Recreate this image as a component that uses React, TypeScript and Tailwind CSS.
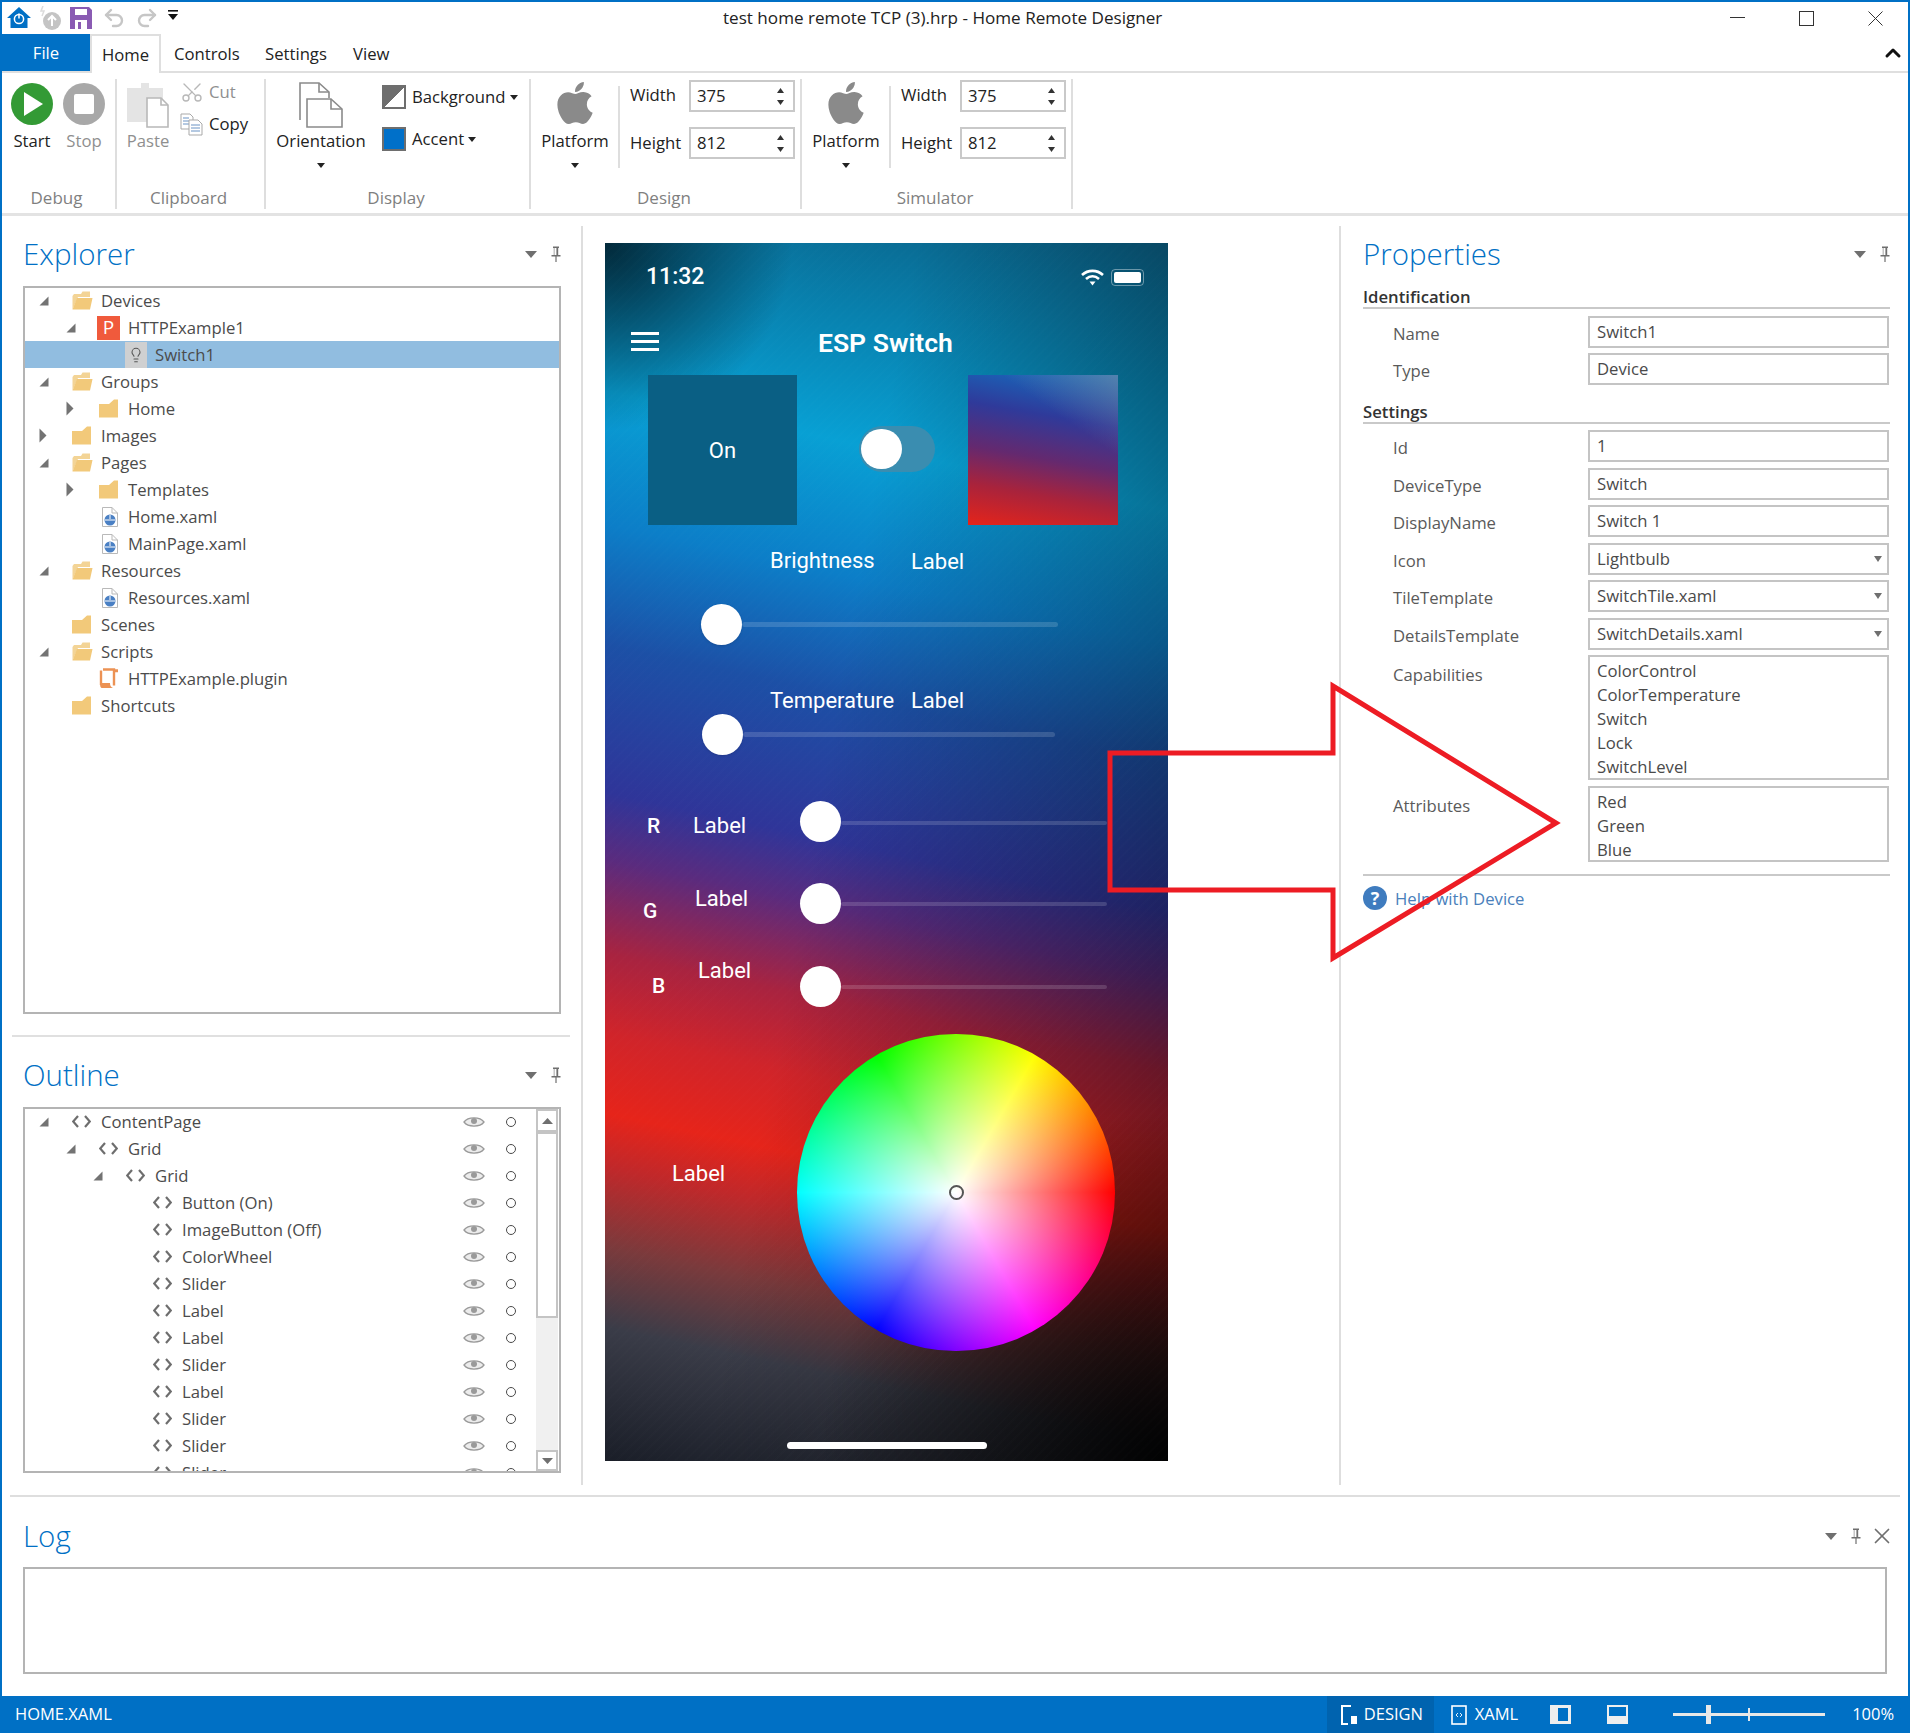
import { Undo2, Redo2, Scissors, ChevronUp, Lightbulb, X } from "lucide-react";
import { FaApple } from "react-icons/fa";

type Row = { l: number; a?: "open" | "closed"; i?: string; t: string; sel?: boolean };

const explorerRows: Row[] = [
  { l: 0, a: "open", i: "folderOpen", t: "Devices" },
  { l: 1, a: "open", i: "p", t: "HTTPExample1" },
  { l: 2, i: "bulb", t: "Switch1", sel: true },
  { l: 0, a: "open", i: "folderOpen", t: "Groups" },
  { l: 1, a: "closed", i: "folder", t: "Home" },
  { l: 0, a: "closed", i: "folder", t: "Images" },
  { l: 0, a: "open", i: "folderOpen", t: "Pages" },
  { l: 1, a: "closed", i: "folder", t: "Templates" },
  { l: 1, i: "doc", t: "Home.xaml" },
  { l: 1, i: "doc", t: "MainPage.xaml" },
  { l: 0, a: "open", i: "folderOpen", t: "Resources" },
  { l: 1, i: "doc", t: "Resources.xaml" },
  { l: 0, i: "folder", t: "Scenes" },
  { l: 0, a: "open", i: "folderOpen", t: "Scripts" },
  { l: 1, i: "plugin", t: "HTTPExample.plugin" },
  { l: 0, i: "folder", t: "Shortcuts" },
];

const outlineRows: Row[] = [
  { l: 0, a: "open", t: "ContentPage" },
  { l: 1, a: "open", t: "Grid" },
  { l: 2, a: "open", t: "Grid" },
  { l: 3, t: "Button (On)" },
  { l: 3, t: "ImageButton (Off)" },
  { l: 3, t: "ColorWheel" },
  { l: 3, t: "Slider" },
  { l: 3, t: "Label" },
  { l: 3, t: "Label" },
  { l: 3, t: "Slider" },
  { l: 3, t: "Label" },
  { l: 3, t: "Slider" },
  { l: 3, t: "Slider" },
  { l: 3, t: "Slider" },
];

const indent = ["pl-[14px]", "pl-[41px]", "pl-[68px]", "pl-[95px]"];

function Arrow({ kind }: { kind?: "open" | "closed" }) {
  if (kind === "open")
    return (
      <svg width="10" height="10" viewBox="0 0 10 10">
        <polygon points="9.5,0.5 9.5,9.5 0.5,9.5" fill="#737373" />
      </svg>
    );
  if (kind === "closed")
    return (
      <svg width="8" height="15" viewBox="0 0 8 15">
        <polygon points="0.5,0.5 7.5,7.5 0.5,14.5" fill="#737373" />
      </svg>
    );
  return null;
}

function TreeIcon({ kind }: { kind?: string }) {
  if (kind === "folderOpen")
    return (
      <svg width="21" height="19" viewBox="0 0 21 19">
        <path d="M0.5 18.5V5L2 3h7l1.5-2.5H18V6H6z" fill="#f3d496" />
        <path d="M0.5 18.5L5 7h15.5l-2.5 11.5z" fill="#f2c97a" />
      </svg>
    );
  if (kind === "folder")
    return (
      <svg width="19" height="19" viewBox="0 0 19 19">
        <path d="M0 18.5V5h10l5-4.5h4V18.5z" fill="#f2c97a" />
      </svg>
    );
  if (kind === "p")
    return (
      <div className="flex h-[24px] w-[23px] -ml-[2px] items-center justify-center bg-[#f05a3c] text-[19px] leading-none text-white">
        P
      </div>
    );
  if (kind === "bulb")
    return (
      <div className="flex h-[26px] w-[22px] -ml-[1px] items-center justify-center bg-[#cfd0d1]">
        <Lightbulb size={16} color="#555" strokeWidth={1.6} />
      </div>
    );
  if (kind === "doc")
    return (
      <svg width="16" height="20" viewBox="0 0 16 20" className="ml-[3px]">
        <path d="M0.5 0.5H10L15.5 6V19.5H0.5z" fill="#fff" stroke="#b9b9b9" />
        <path d="M10 0.5V6H15.5" fill="none" stroke="#b9b9b9" />
        <circle cx="8" cy="13" r="5.5" fill="#4a80c4" />
        <path d="M3 13h10M8 8v4" stroke="#fff" strokeWidth="1" />
      </svg>
    );
  if (kind === "plugin")
    return (
      <svg width="20" height="21" viewBox="0 0 20 21">
        <path d="M4 1.5H15V17.5" fill="none" stroke="#ec9254" strokeWidth="2.4" />
        <path d="M2 2.5V17" fill="none" stroke="#ec9254" strokeWidth="2.4" />
        <path d="M15 1.2h4v3h-3z" fill="#ec9254" />
        <path d="M1 15h10c0 3 1 4 3 5H3c-1.5 0-2-2-2-5z" fill="#ec9254" />
      </svg>
    );
  return (
    <svg width="19" height="13" viewBox="0 0 19 13" className="block">
      <path d="M6 1L1.2 6.5L6 12M13 1l4.8 5.5L13 12" fill="none" stroke="#6e6e6e" strokeWidth="2.2" />
    </svg>
  );
}

function TreeRow({ row, extras }: { row: Row; extras?: boolean }) {
  return (
    <div
      className={`flex h-[27px] shrink-0 items-center text-[#4b4b4b] ${indent[row.l]} ${row.sel ? "bg-[#91bde0]" : ""}`}
    >
      <div className="flex w-[33px] shrink-0 items-center">
        <Arrow kind={row.a} />
      </div>
      <div className="flex w-[29px] shrink-0 items-center">
        <TreeIcon kind={row.i} />
      </div>
      <span className="whitespace-nowrap">{row.t}</span>
      {extras && (
        <div className="ml-auto flex items-center pr-[20px]">
          <svg width="22" height="14" viewBox="0 0 22 14" className="mr-[21px]">
            <path d="M1 7C5 1.5 17 1.5 21 7C17 12.5 5 12.5 1 7z" fill="#ececec" stroke="#9a9a9a" strokeWidth="1.3" />
            <circle cx="11" cy="6" r="3" fill="#9a9a9a" />
          </svg>
          <div className="h-[10px] w-[10px] rounded-full border-[1.5px] border-[#4a4a4a]" />
        </div>
      )}
    </div>
  );
}

function PaneIcons({ close }: { close?: boolean }) {
  return (
    <div className="flex items-center gap-[14px]">
      <svg width="12" height="7" viewBox="0 0 12 7">
        <polygon points="0,0 12,0 6,7" fill="#6f6f6f" />
      </svg>
      <svg width="10" height="16" viewBox="0 0 10 16">
        <path d="M2 0.5H8V2H7.2V9H9.5V10.5H5.6V16H4.4V10.5H0.5V9H2.8V2H2z" fill="#6f6f6f" />
        <rect x="3.4" y="2" width="2" height="7" fill="#fff" />
      </svg>
      {close && <X size={26} color="#6f6f6f" strokeWidth={1.6} className="-mx-[6px]" />}
    </div>
  );
}

function PaneHeader({ title, close }: { title: string; close?: boolean }) {
  return (
    <div className="flex h-[42px] items-center justify-between">
      <span className="text-[29.5px] font-light leading-[42px] text-[#0070c5]">{title}</span>
      <PaneIcons close={close} />
    </div>
  );
}

function Caret({ className }: { className?: string }) {
  return (
    <svg width="8" height="5" viewBox="0 0 8 5" className={className}>
      <polygon points="0,0 8,0 4,5" fill="#222" />
    </svg>
  );
}

function Spinner({ value }: { value: string }) {
  return (
    <div className="flex h-[32px] w-[106px] items-center justify-between border-2 border-[#c9c9c9] pl-[6px] pr-[9px] text-[#222]">
      <span className="leading-none">{value}</span>
      <div className="flex flex-col gap-[7px]">
        <svg width="7" height="5" viewBox="0 0 7 5">
          <polygon points="0,5 7,5 3.5,0" fill="#333" />
        </svg>
        <svg width="7" height="5" viewBox="0 0 7 5">
          <polygon points="0,0 7,0 3.5,5" fill="#333" />
        </svg>
      </div>
    </div>
  );
}

function GroupLabel({ children, className }: { children: string; className?: string }) {
  return <div className={`h-[22px] text-center text-[17px] leading-[21px] text-[#7f7f7f] ${className ?? "pr-[3px]"}`}>{children}</div>;
}

function PlatformPart() {
  return (
    <>
      <div className="flex w-[66px] shrink-0 flex-col items-center">
        <FaApple size={48} color="#8a8a8a" />
        <span className="mt-[2px] leading-[24px] text-[#222]">Platform</span>
        <Caret className="mt-[10px]" />
      </div>
      <div className="ml-[10px] mt-[7px] h-[82px] w-[2px] bg-[#dedede]" />
      <div className="ml-[10px] mt-[1px] grid grid-cols-[59px_106px] items-center gap-y-[15px] self-start text-[#222]">
        <span className="-mt-[2px]">Width</span>
        <Spinner value="375" />
        <span>Height</span>
        <Spinner value="812" />
      </div>
    </>
  );
}

function PropRow({ label, value, select }: { label: string; value: string; select?: boolean }) {
  return (
    <>
      <span className="self-center pl-[30px] pt-[4px] text-[#5a5a5a]">{label}</span>
      <div className="flex h-[32px] items-center justify-between border-2 border-[#c4c4c4] pl-[7px] pr-[5px] text-[#4a4a4a]">
        <span className="pt-[1px] leading-none">{value}</span>
        {select && (
          <svg width="8" height="6" viewBox="0 0 8 6">
            <polygon points="0,0 8,0 4,6" fill="#6f6f6f" />
          </svg>
        )}
      </div>
    </>
  );
}

function ListRow({ label, lines, height }: { label: string; lines: string[]; height: string }) {
  return (
    <>
      <span className="pl-[30px] pt-[7px] text-[#5a5a5a]">{label}</span>
      <div className={`${height} border-2 border-[#c4c4c4] pl-[7px] pt-[2px] leading-[24px] text-[#4a4a4a]`}>
        {lines.map((l) => (
          <div key={l}>{l}</div>
        ))}
      </div>
    </>
  );
}

function Phone() {
  return (
    <div className="relative mt-[27px] ml-[22px] h-[1218px] w-[563px] overflow-hidden bg-[repeating-linear-gradient(135deg,rgba(255,255,255,0.008)_0px,rgba(255,255,255,0.008)_2px,rgba(0,0,0,0)_2px,rgba(0,0,0,0)_7px),radial-gradient(circle_at_100%_100%,rgba(0,0,0,0.95),rgba(0,0,0,0)_26%),radial-gradient(circle_at_0%_0%,rgba(0,20,30,0.8),rgba(0,0,0,0)_14%),linear-gradient(100deg,rgba(0,0,0,0)_40%,rgba(0,0,0,0.46)_100%),linear-gradient(192deg,#0a5f84_0%,#0880ad_10%,#08a0d4_20%,#0c7ec8_30%,#1c50a6_39%,#2f3599_50%,#5a2b7e_55%,#a82340_62%,#d0242a_68%,#e6241a_74%,#c0282a_78%,#7a3a3c_84%,#3a3c48_90%,#1a1e28_100%)] font-['Roboto'] text-white">
      <span className="absolute left-[41px] top-[20px] text-[23px] font-medium leading-[28px]">11:32</span>
      <svg width="23" height="17" viewBox="0 0 23 17" className="absolute left-[476px] top-[26px]">
        <path d="M1 6C7 0.5 16 0.5 22 6M5 10C9 6.5 14 6.5 18 10" fill="none" stroke="#fff" strokeWidth="2.6" />
        <polygon points="8.5,12.5 14.5,12.5 11.5,16.5" fill="#fff" />
      </svg>
      <div className="absolute left-[506px] top-[26px] flex h-[17px] w-[33px] items-center rounded-[4px] border border-white/40 p-[2px]">
        <div className="h-full w-full rounded-[2px] bg-white" />
      </div>
      <div className="absolute left-[26px] top-[89px] flex w-[28px] flex-col gap-[5px]">
        <div className="h-[3px] bg-white" />
        <div className="h-[3px] bg-white" />
        <div className="h-[3px] bg-white" />
      </div>
      <span className="absolute left-[213px] top-[83px] text-[26.5px] font-semibold leading-[34px]">ESP Switch</span>

      <div className="absolute left-[43px] top-[132px] flex h-[150px] w-[149px] items-center justify-center bg-[#0a5f84] text-[22px]">
        On
      </div>
      <div className="absolute left-[254px] top-[183px] h-[46px] w-[76px] rounded-full bg-[#3a8db0]" />
      <div className="absolute left-[256px] top-[186px] h-[40px] w-[41px] rounded-full bg-white" />
      <div className="absolute left-[363px] top-[132px] h-[150px] w-[150px] bg-[linear-gradient(215deg,rgba(160,150,150,0.45),rgba(160,150,150,0)_32%),linear-gradient(190deg,#1272c2_0%,#2f3a9a_30%,#64296f_55%,#a8233c_76%,#e5241a_100%)]" />

      <span className="absolute left-[165px] top-[304px] text-[22px] leading-[28px]">Brightness</span>
      <span className="absolute left-[306px] top-[305px] text-[22px] leading-[28px]">Label</span>
      <div className="absolute left-[137px] top-[379px] h-[5px] w-[316px] rounded-full bg-white/15" />
      <div className="absolute left-[96px] top-[361px] h-[41px] w-[41px] rounded-full bg-white shadow" />

      <span className="absolute left-[165px] top-[444px] text-[22px] leading-[28px]">Temperature</span>
      <span className="absolute left-[306px] top-[444px] text-[22px] leading-[28px]">Label</span>
      <div className="absolute left-[138px] top-[489px] h-[5px] w-[312px] rounded-full bg-white/15" />
      <div className="absolute left-[97px] top-[471px] h-[41px] w-[41px] rounded-full bg-white shadow" />

      <span className="absolute left-[42px] top-[569px] text-[21px] font-medium leading-[28px]">R</span>
      <span className="absolute left-[88px] top-[569px] text-[22px] leading-[28px]">Label</span>
      <div className="absolute left-[236px] top-[578px] h-[4px] w-[266px] rounded-full bg-white/15" />
      <div className="absolute left-[195px] top-[558px] h-[41px] w-[41px] rounded-full bg-white" />

      <span className="absolute left-[38px] top-[654px] text-[21px] font-medium leading-[28px]">G</span>
      <span className="absolute left-[90px] top-[642px] text-[22px] leading-[28px]">Label</span>
      <div className="absolute left-[236px] top-[659px] h-[4px] w-[266px] rounded-full bg-white/15" />
      <div className="absolute left-[195px] top-[640px] h-[41px] w-[41px] rounded-full bg-white" />

      <span className="absolute left-[47px] top-[729px] text-[21px] font-medium leading-[28px]">B</span>
      <span className="absolute left-[93px] top-[714px] text-[22px] leading-[28px]">Label</span>
      <div className="absolute left-[236px] top-[742px] h-[4px] w-[266px] rounded-full bg-white/15" />
      <div className="absolute left-[195px] top-[723px] h-[41px] w-[41px] rounded-full bg-white" />

      <span className="absolute left-[67px] top-[917px] text-[22px] leading-[28px]">Label</span>
      <div className="absolute left-[192px] top-[791px] h-[317px] w-[318px] rounded-full bg-[radial-gradient(closest-side,#ffffff,rgba(255,255,255,0)),conic-gradient(from_30deg,#ffff00,#ff0000,#ff00ff,#0000ff,#00ffff,#00ff00,#ffff00)]" />
      <div className="absolute left-[344px] top-[942px] h-[15px] w-[15px] rounded-full border-2 border-[#555]" />

      <div className="absolute left-[182px] top-[1199px] h-[7px] w-[200px] rounded-full bg-white" />
    </div>
  );
}

export default function App() {
  return (
    <div className="relative flex h-[1733px] w-[1910px] flex-col overflow-hidden bg-[#0070c5] px-[2px] pt-[2px] font-['Open_Sans',sans-serif] text-[16.7px]">
      <div className="flex min-h-0 flex-1 flex-col bg-white">
        {/* title bar */}
        <div className="flex h-[32px] shrink-0 items-center">
          <div className="flex w-[721px] shrink-0 items-center pl-[5px]">
            <svg width="24" height="22" viewBox="0 0 24 22">
              <path d="M12 0L24 11H20.5V21H3.5V11H0z" fill="#0070c5" />
              <circle cx="12" cy="12" r="4.6" fill="none" stroke="#fff" strokeWidth="1.5" />
              <path d="M12 6.5v5" stroke="#fff" strokeWidth="1.5" />
            </svg>
            <svg width="23" height="24" viewBox="0 0 23 24" className="ml-[8px]">
              <circle cx="13" cy="15" r="9" fill="#c4c4c4" />
              <path d="M13 20v-9M9 14l4-4 4 4" fill="none" stroke="#fff" strokeWidth="2" />
              <path d="M4 0l-2 5 3 0-2 5" fill="none" stroke="#dcdcdc" strokeWidth="1.5" />
            </svg>
            <svg width="22" height="22" viewBox="0 0 22 22" className="ml-[8px]">
              <path d="M0 0H19L22 3V22H0z" fill="#8a5bb3" />
              <rect x="5" y="2" width="12" height="6" fill="#fff" />
              <rect x="5" y="13" width="12" height="9" fill="#fff" />
              <rect x="8" y="15" width="3" height="7" fill="#8a5bb3" />
            </svg>
            <Undo2 size={24} color="#c6c6c6" strokeWidth={2.4} className="ml-[10px]" />
            <Redo2 size={24} color="#c6c6c6" strokeWidth={2.4} className="ml-[9px]" />
            <svg width="10" height="10" viewBox="0 0 10 10" className="ml-[9px] -mt-[6px]">
              <rect x="0" y="0" width="10" height="1.6" fill="#111" />
              <polygon points="0,4 10,4 5,10" fill="#111" />
            </svg>
          </div>
          <span className="whitespace-nowrap text-[17.1px] text-[#222]">test home remote TCP (3).hrp - Home Remote Designer</span>
          <div className="ml-auto flex items-center gap-[54px] pr-[25px]">
            <svg width="15" height="15" viewBox="0 0 15 15" className="-mt-[2px]">
              <path d="M0 7.5H15" stroke="#333" strokeWidth="1" />
            </svg>
            <svg width="15" height="15" viewBox="0 0 15 15">
              <rect x="0.5" y="0.5" width="14" height="14" fill="none" stroke="#333" strokeWidth="1" />
            </svg>
            <svg width="15" height="15" viewBox="0 0 15 15">
              <path d="M0.5 0.5L14.5 14.5M14.5 0.5L0.5 14.5" stroke="#333" strokeWidth="1" />
            </svg>
          </div>
        </div>

        {/* tabs */}
        <div className="flex h-[39px] shrink-0 items-stretch border-b-2 border-[#dfdfdf] text-[#222]">
          <div className="flex h-[37px] w-[88px] items-center justify-center bg-[#0070c5] text-white">File</div>
          <div className="-mb-[2px] flex h-[39px] w-[71px] items-center justify-center border-x-2 border-t-2 border-[#dfdfdf] bg-white">
            Home
          </div>
          <div className="flex w-[104px] items-center pl-[13px] pt-[2px]">Controls</div>
          <div className="flex w-[88px] items-center pt-[2px]">Settings</div>
          <div className="flex w-[60px] items-center pt-[2px]">View</div>
          <div className="ml-auto flex items-center pr-[3px]">
            <ChevronUp size={24} color="#111" strokeWidth={3} />
          </div>
        </div>

        {/* ribbon */}
        <div className="flex h-[143px] shrink-0 border-b-[3px] border-[#e3e3e3] pt-[6px] text-[#222]">
          <div className="flex h-[130px] w-[115px] shrink-0 flex-col border-r-2 border-[#dedede]">
            <div className="flex h-[108px] gap-[10px] pl-[9px] pt-[4px]">
              <div className="flex w-[42px] flex-col items-center">
                <div className="flex h-[42px] w-[42px] items-center justify-center rounded-full bg-[#339a35]">
                  <svg width="20" height="24" viewBox="0 0 20 24" className="ml-[2px]">
                    <polygon points="1,0 20,12 1,24" fill="#fff" />
                  </svg>
                </div>
                <span className="mt-[4px] leading-[24px]">Start</span>
              </div>
              <div className="flex w-[42px] flex-col items-center">
                <div className="flex h-[42px] w-[42px] items-center justify-center rounded-full bg-[#a8a8a8]">
                  <div className="h-[20px] w-[20px] rounded-[2px] bg-white" />
                </div>
                <span className="mt-[4px] leading-[24px] text-[#8f8f8f]">Stop</span>
              </div>
            </div>
            <GroupLabel className="pr-[4px]">Debug</GroupLabel>
          </div>

          <div className="flex h-[130px] w-[149px] shrink-0 flex-col border-r-2 border-[#dedede]">
            <div className="flex h-[108px] pl-[10px]">
              <div className="flex w-[42px] flex-col items-center pt-[3px]">
                <svg width="42" height="46" viewBox="0 0 42 46">
                  <path d="M0 6H14V1H22V6H36V40H0z" fill="#e4e4e4" />
                  <path d="M20 16H34L41 23V45H20z" fill="#fff" stroke="#b8b8b8" strokeWidth="1.6" />
                  <path d="M34 16V23H41" fill="none" stroke="#b8b8b8" strokeWidth="1.6" />
                </svg>
                <span className="mt-[1px] leading-[24px] text-[#8f8f8f]">Paste</span>
              </div>
              <div className="ml-[11px] flex flex-col gap-[7px]">
                <div className="flex h-[26px] items-center text-[#8f8f8f]">
                  <Scissors size={24} color="#b8b8b8" strokeWidth={1.4} className="-rotate-90" />
                  <span className="ml-[5px]">Cut</span>
                </div>
                <div className="-mt-[1px] flex h-[26px] items-center">
                  <svg width="23" height="23" viewBox="0 0 23 23">
                    <path d="M1 1H10L13 4V16H1z" fill="#fff" stroke="#a9a9a9" />
                    <path d="M3 5H9M3 8H10M3 11H10" stroke="#6b93c4" />
                    <path d="M9 7H18L22 11V22H9z" fill="#fff" stroke="#a9a9a9" />
                    <path d="M11 12H20M11 15H20M11 18H20" stroke="#6b93c4" />
                  </svg>
                  <span className="ml-[6px]">Copy</span>
                </div>
              </div>
            </div>
            <GroupLabel className="pr-[4px]">Clipboard</GroupLabel>
          </div>

          <div className="flex h-[130px] w-[265px] shrink-0 flex-col border-r-2 border-[#dedede]">
            <div className="flex h-[108px] pl-[10px]">
              <div className="flex w-[90px] flex-col items-center pt-[3px]">
                <svg width="44" height="46" viewBox="0 0 44 46">
                  <path d="M1 38V1H20L30 10V16" fill="none" stroke="#8a8a8a" strokeWidth="1.6" />
                  <path d="M20 1V10H30" fill="none" stroke="#8a8a8a" strokeWidth="1.6" />
                  <path d="M8 17H32L43 27V45H8z" fill="#fff" stroke="#8a8a8a" strokeWidth="1.6" />
                  <path d="M32 17V27H43" fill="none" stroke="#8a8a8a" strokeWidth="1.6" />
                </svg>
                <span className="mt-[1px] leading-[24px]">Orientation</span>
                <Caret className="mt-[10px]" />
              </div>
              <div className="ml-[16px] flex flex-col gap-[18px] pt-[6px]">
                <div className="flex h-[24px] items-center">
                  <div className="h-[24px] w-[24px] border-2 border-[#6e6e6e] bg-[linear-gradient(135deg,#6e6e6e_50%,#ffffff_50%)]" />
                  <span className="ml-[6px]">Background</span>
                  <Caret className="ml-[5px]" />
                </div>
                <div className="flex h-[24px] items-center">
                  <div className="h-[24px] w-[24px] border-2 border-[#6e6e6e] bg-[#0070c9]" />
                  <span className="ml-[6px]">Accent</span>
                  <Caret className="ml-[4px]" />
                </div>
              </div>
            </div>
            <GroupLabel>Display</GroupLabel>
          </div>

          <div className="flex h-[130px] w-[271px] shrink-0 flex-col border-r-2 border-[#dedede]">
            <div className="flex h-[108px] pl-[11px]">
              <PlatformPart />
            </div>
            <GroupLabel>Design</GroupLabel>
          </div>

          <div className="flex h-[130px] w-[271px] shrink-0 flex-col border-r-2 border-[#dedede]">
            <div className="flex h-[108px] pl-[11px]">
              <PlatformPart />
            </div>
            <GroupLabel>Simulator</GroupLabel>
          </div>
        </div>

        {/* main panes */}
        <div className="flex h-[1279px] shrink-0">
          <div className="flex w-[579px] shrink-0 flex-col pl-[21px] pr-[20px]">
            <div className="mt-[17px]">
              <PaneHeader title="Explorer" />
            </div>
            <div className="mt-[11px] flex h-[728px] flex-col border-2 border-[#b4b4b4]">
              <div className="-mt-[1px] flex flex-col">
                {explorerRows.map((r, i) => (
                  <TreeRow key={i} row={r} />
                ))}
              </div>
            </div>
            <div className="-ml-[11px] mt-[21px] h-[2px] w-[558px] bg-[#e0e0e0]" />
            <div className="mt-[17px]">
              <PaneHeader title="Outline" />
            </div>
            <div className="mt-[11px] flex h-[366px] border-2 border-[#b4b4b4]">
              <div className="-mt-[1px] flex min-w-0 flex-1 flex-col overflow-hidden">
                {outlineRows.map((r, i) => (
                  <TreeRow key={i} row={r} extras />
                ))}
              </div>
              <div className="mr-[1px] flex w-[22px] shrink-0 flex-col">
                <div className="flex h-[23px] shrink-0 items-center justify-center border-2 border-[#c4c4c4]">
                  <svg width="11" height="6" viewBox="0 0 11 6">
                    <polygon points="0,6 11,6 5.5,0" fill="#6f6f6f" />
                  </svg>
                </div>
                <div className="h-[186px] shrink-0 border-2 border-[#c4c4c4]" />
                <div className="flex-1 bg-[#f0f0f0]" />
                <div className="flex h-[21px] shrink-0 items-center justify-center border-2 border-[#c4c4c4]">
                  <svg width="11" height="6" viewBox="0 0 11 6">
                    <polygon points="0,0 11,0 5.5,6" fill="#6f6f6f" />
                  </svg>
                </div>
              </div>
            </div>
          </div>

          <div className="my-[10px] w-[2px] shrink-0 bg-[#dedede]" />

          <div className="w-[756px] shrink-0">
            <Phone />
          </div>

          <div className="my-[10px] w-[2px] shrink-0 bg-[#dedede]" />

          <div className="flex min-w-0 flex-1 flex-col pl-[22px] pr-[18px]">
            <div className="mt-[17px]">
              <PaneHeader title="Properties" />
            </div>
            <div className="mt-[11px] h-[23px] border-b-2 border-[#c9c9c9] font-semibold leading-[21px] text-[#333]">
              Identification
            </div>
            <div className="mt-[7px] grid grid-cols-[225px_301px] gap-y-[5px]">
              <PropRow label="Name" value="Switch1" />
              <PropRow label="Type" value="Device" />
            </div>
            <div className="mt-[16px] h-[23px] border-b-2 border-[#c9c9c9] font-semibold leading-[21px] text-[#333]">
              Settings
            </div>
            <div className="mt-[6px] grid grid-cols-[225px_301px] gap-y-[5.5px]">
              <PropRow label="Id" value="1" />
              <PropRow label="DeviceType" value="Switch" />
              <PropRow label="DisplayName" value="Switch 1" />
              <PropRow label="Icon" value="Lightbulb" select />
              <PropRow label="TileTemplate" value="SwitchTile.xaml" select />
              <PropRow label="DetailsTemplate" value="SwitchDetails.xaml" select />
              <ListRow
                label="Capabilities"
                lines={["ColorControl", "ColorTemperature", "Switch", "Lock", "SwitchLevel"]}
                height="h-[125px]"
              />
              <ListRow label="Attributes" lines={["Red", "Green", "Blue"]} height="h-[76px]" />
            </div>
            <div className="mt-[12px] h-[2px] bg-[#c9c9c9]" />
            <div className="mt-[10px] flex items-center">
              <div className="flex h-[24px] w-[24px] items-center justify-center rounded-full bg-[#3f7cbf] text-[18px] font-bold leading-none text-white">
                ?
              </div>
              <span className="ml-[8px] text-[#4a80bb]">Help with Device</span>
            </div>
          </div>
        </div>

        {/* log */}
        <div className="mx-[8px] h-[2px] shrink-0 bg-[#dedede]" />
        <div className="flex min-h-0 flex-1 flex-col pl-[21px] pr-[19px]">
          <div className="mt-[18px]">
            <PaneHeader title="Log" close />
          </div>
          <div className="mt-[10px] h-[107px] w-[1864px] border-2 border-[#b4b4b4]" />
        </div>

        {/* status bar */}
        <div className="-mx-[2px] flex h-[37px] shrink-0 items-center bg-[#0070c5] text-[16.5px] text-white">
          <span className="pl-[15px]">HOME.XAML</span>
          <div className="ml-[1215px] flex h-full w-[107px] items-center bg-[#0063af] pl-[14px]">
            <svg width="17" height="20" viewBox="0 0 17 20">
              <path d="M10 1H1V19H7" fill="none" stroke="#fff" strokeWidth="2" />
              <rect x="10" y="11" width="6" height="8" fill="#fff" />
            </svg>
            <span className="ml-[6px]">DESIGN</span>
          </div>
          <div className="ml-[17px] flex items-center">
            <svg width="16" height="20" viewBox="0 0 16 20">
              <rect x="1" y="1" width="14" height="18" fill="none" stroke="#fff" strokeWidth="1.6" />
              <path d="M7 8L5 10L7 12M9 8L11 10L9 12" fill="none" stroke="#fff" strokeWidth="0.9" />
            </svg>
            <span className="ml-[8px]">XAML</span>
          </div>
          <div className="ml-[32px] flex h-[19px] w-[21px] border-[3px] border-l-[8px] border-[#eee]" />
          <div className="ml-[36px] flex h-[19px] w-[21px] flex-col border-[2px] border-b-[8px] border-[#eee] bg-[#0070c5]" />
          <div className="relative ml-[45px] h-[3px] w-[152px] bg-[#e8e8e8]">
            <div className="absolute left-[33px] top-[-8px] h-[19px] w-[5px] bg-[#e8e8e8]" />
            <div className="absolute left-[75px] top-[-5px] h-[13px] w-[2px] bg-[#e8e8e8]" />
          </div>
          <span className="ml-[27px]">100%</span>
        </div>
      </div>

      {/* red arrow drawn over the screenshot */}
      <svg width="1910" height="1733" viewBox="0 0 1910 1733" className="pointer-events-none absolute left-0 top-0">
        <polygon
          points="1110,753 1333,753 1333,686 1556,823 1333,958 1333,890 1110,890"
          fill="none"
          stroke="#ed1c24"
          strokeWidth="5"
        />
      </svg>
    </div>
  );
}
